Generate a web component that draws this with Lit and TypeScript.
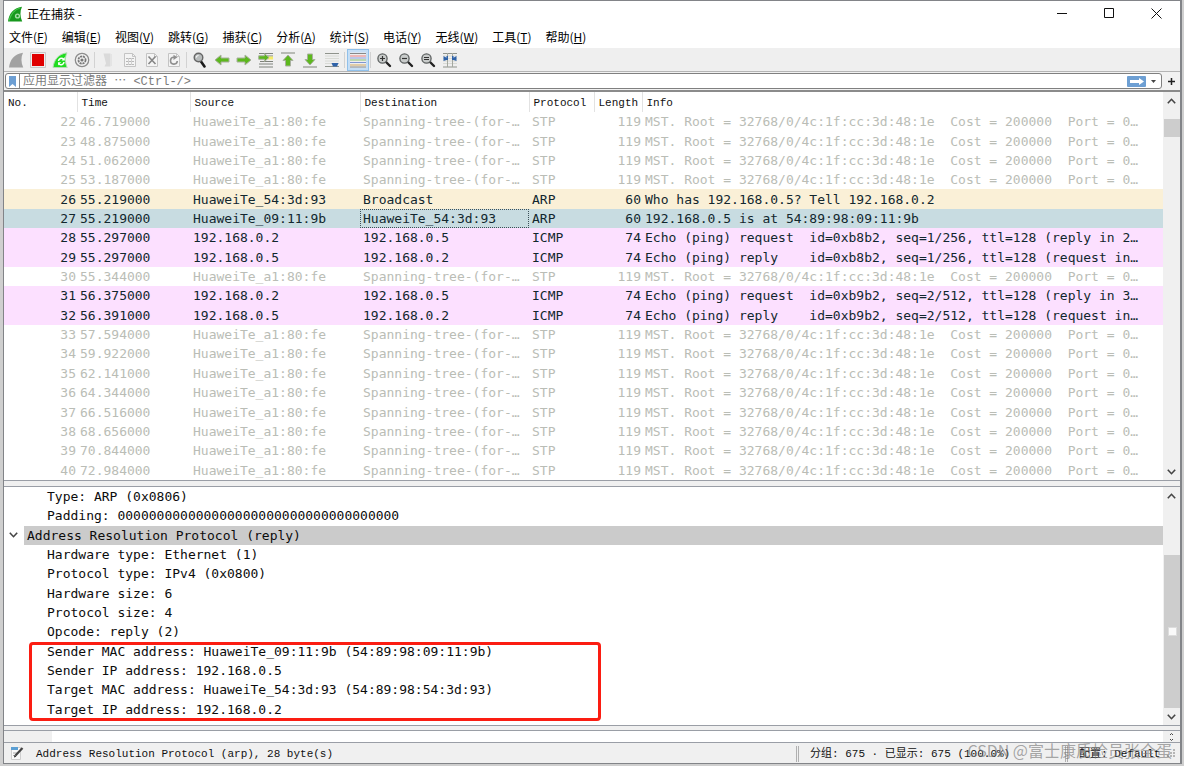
import { LitElement, html, svg, css, TemplateResult } from "lit";
import { customElement } from "lit/decorators.js";
import { classMap } from "lit/directives/class-map.js";

type Kind = "stp" | "arp" | "sel" | "icmp";
interface Packet {
  no: number;
  time: string;
  src: string;
  dst: string;
  proto: string;
  len: number;
  info: string;
  kind: Kind;
}

const stp = (no: number, time: string): Packet => ({
  no, time, src: "HuaweiTe_a1:80:fe", dst: "Spanning-tree-(for-…", proto: "STP", len: 119,
  info: "MST. Root = 32768/0/4c:1f:cc:3d:48:1e  Cost = 200000  Port = 0…", kind: "stp",
});
const ping = (no: number, time: string, reply: boolean, info: string): Packet => ({
  no, time, src: reply ? "192.168.0.5" : "192.168.0.2", dst: reply ? "192.168.0.2" : "192.168.0.5",
  proto: "ICMP", len: 74, info, kind: "icmp",
});

const PACKETS: Packet[] = [
  stp(22, "46.719000"), stp(23, "48.875000"), stp(24, "51.062000"), stp(25, "53.187000"),
  { no: 26, time: "55.219000", src: "HuaweiTe_54:3d:93", dst: "Broadcast", proto: "ARP", len: 60,
    info: "Who has 192.168.0.5? Tell 192.168.0.2", kind: "arp" },
  { no: 27, time: "55.219000", src: "HuaweiTe_09:11:9b", dst: "HuaweiTe_54:3d:93", proto: "ARP", len: 60,
    info: "192.168.0.5 is at 54:89:98:09:11:9b", kind: "sel" },
  ping(28, "55.297000", false, "Echo (ping) request  id=0xb8b2, seq=1/256, ttl=128 (reply in 2…"),
  ping(29, "55.297000", true, "Echo (ping) reply    id=0xb8b2, seq=1/256, ttl=128 (request in…"),
  stp(30, "55.344000"),
  ping(31, "56.375000", false, "Echo (ping) request  id=0xb9b2, seq=2/512, ttl=128 (reply in 3…"),
  ping(32, "56.391000", true, "Echo (ping) reply    id=0xb9b2, seq=2/512, ttl=128 (request in…"),
  stp(33, "57.594000"), stp(34, "59.922000"), stp(35, "62.141000"), stp(36, "64.344000"),
  stp(37, "66.516000"), stp(38, "68.656000"), stp(39, "70.844000"), stp(40, "72.984000"),
];

const MENUS: [string, string][] = [
  ["文件", "F"], ["编辑", "E"], ["视图", "V"], ["跳转", "G"], ["捕获", "C"], ["分析", "A"],
  ["统计", "S"], ["电话", "Y"], ["无线", "W"], ["工具", "T"], ["帮助", "H"],
];

const fin = "M1 15.5C2 8 6 2 15 .8c-2.200 4.500-2 10 .2 14.700z";
const lines = (ys: number[], color = "#b4b8b0") =>
  ys.map((y) => svg`<path d="M1 ${y}h14" stroke=${color}/>`);
const page = svg`<path d="M2.500 1.500h8l3 3v10h-11z" fill="#f4f4f4" stroke="#c4c4c4"/><path d="M10.500 1.500v3h3" fill="none" stroke="#c4c4c4"/>`;
const lens = (mark: TemplateResult | ReturnType<typeof svg>) => svg`
  <path d="M10 10l4 4" stroke="#222" stroke-width="2.400" stroke-linecap="round"/>
  <circle cx="6.500" cy="6.500" r="4.600" fill="#c9cccb" stroke="#5c6060" stroke-width="1.300"/>${mark}`;
const greenArrow = "M1 8l6-5v3h8v4H7v3z";

const ICONS: Record<string, ReturnType<typeof svg>> = {
  start: svg`<path d=${fin} fill="#a2a2a2"/>`,
  stop: svg`<path d="M.5 .5h15v15H.5z" fill="#efefef" stroke="#c8c8c8"/><path d="M2 2h12v12H2z" fill="#e00000"/>`,
  restart: svg`<path d=${fin} fill="#1fdc1f" stroke="#b4dcb4"/><path d="M6.500 9a3 3 0 0 1 5-2M12 10a3 3 0 0 1-5 2" fill="none" stroke="#fff" stroke-width="1.500"/><path d="M12.800 5v3.500H9.500zM6 13.500V10.200h3.200z" fill="#fff"/>`,
  options: svg`<circle cx="8" cy="8" r="6.700" fill="#f2f2f2" stroke="#8c8c8c" stroke-width="1.300"/><circle cx="8" cy="8" r="3.600" fill="none" stroke="#777" stroke-width="1.800" stroke-dasharray="2.200 .7"/><circle cx="8" cy="8" r="1.600" fill="#777"/>`,
  open: svg`<path d="M3.500 1.500h7v13h-6l1.500-3z" fill="#dadada"/><path d="M11 2v12" stroke="#e4e4e4" stroke-width="2"/>`,
  save: svg`${page}<path d="M4 6.500h8M4 9.500h8M4 12.500h8" stroke="#b8b8b8"/><path d="M6.500 6v7M9.500 6v7" stroke="#d0d0d0"/>`,
  close: svg`${page}<path d="M4.500 4.500l7 7.500M11.500 4.500l-7 7.500" stroke="#858585" stroke-width="1.600"/>`,
  reload: svg`${page}<path d="M11.300 9a3.400 3.400 0 1 1-3.300-3.700" fill="none" stroke="#909090" stroke-width="1.600"/><path d="M7.500 2.800l4 2.500-4 2.700z" fill="#909090"/>`,
  find: svg`<path d="M9 9.500l3.500 5" stroke="#1c1c1c" stroke-width="2.600" stroke-linecap="round"/><circle cx="6.500" cy="5.500" r="4.300" fill="#b8bcbc" stroke="#666" stroke-width="1.400"/><path d="M4.300 5.500a2.200 2.200 0 0 1 2.200-2" fill="none" stroke="#fff" stroke-width="1.200"/>`,
  back: svg`<path d=${greenArrow} fill="#5cb81c" stroke="#a8b09e" stroke-linejoin="round"/>`,
  forward: svg`<path d="M15 8L9 3v3H1v4h8v3z" fill="#5cb81c" stroke="#a8b09e" stroke-linejoin="round"/>`,
  goto: svg`<path d="M1 1.500h14M9 4h6M9 6.500h6M2 9.500h13M1 12h14M1 15h14" stroke="#7f837c"/><path d="M10 4.500h5v3h-5z" fill="#f4ec68"/><path d="M11 5.500L6.500 1.500v2.300H.7v3.500h5.800v2.200z" fill="#5cb81c" stroke="#a8b09e"/>`,
  first: svg`<path d="M1 1h14" stroke="#a5a9a0" stroke-width="1.500"/><path d="M8 3l5 5.500h-2.500V14H5.500V8.500H3z" fill="#5cb81c" stroke="#a8b09e"/>`,
  last: svg`<path d="M1 15h14" stroke="#a5a9a0" stroke-width="1.500"/><path d="M8 13l5-5.500h-2.500V2H5.500v5.500H3z" fill="#5cb81c" stroke="#a8b09e"/>`,
  autoscroll: svg`${lines([4, 6.5, 9, 11.5], "#d8dad5")}<path d="M1 1.500h14M1 14.500h14" stroke="#8f938c" stroke-width="1.200"/><path d="M7.500 11h7l-1.500 3.500H9z" fill="#2f62a8"/>`,
  colorize: svg`<path d="M0 .5h16v15H0z" fill="#eee"/><path d="M0 1.500h16M0 15h16" stroke="#888"/><path d="M0 4h16" stroke="#ee8080"/><path d="M0 6h16" stroke="#8aa0e0"/><path d="M0 8h16" stroke="#88c070"/><path d="M0 10.500h16" stroke="#7f95d0"/><path d="M0 13h16" stroke="#d0a860"/>`,
  zoomin: lens(svg`<path d="M4 6.500h5M6.500 4v5" stroke="#333" stroke-width="1.200"/>`),
  zoomout: lens(svg`<path d="M4 6.500h5" stroke="#333" stroke-width="1.200"/>`),
  zoomfit: lens(svg`<path d="M4 5.500h5M4 7.500h5" stroke="#333" stroke-width="1.200"/>`),
  resize: svg`${lines([4, 6.5, 9, 11.5], "#d8dad5")}<path d="M1 1.500h14M1 15h14" stroke="#8f938c"/><path d="M5.500 1v14M10.500 1v14" stroke="#a4a8a0"/><path d="M1.500 4l3 1.800v-1.800h1.500v4h-1.500l-3 1zM14.500 4l-3 1.800v-1.800H10v4h1.500l3 1z" fill="#2f62a8"/>`,
};

const TOOLS: [string, string][][] = [
  [["start", "开始捕获"], ["stop", "停止捕获"], ["restart", "重新捕获"], ["options", "捕获选项"]],
  [["open", "打开"], ["save", "保存"], ["close", "关闭"], ["reload", "重新加载"]],
  [["find", "查找"], ["back", "后退"], ["forward", "前进"], ["goto", "转到分组"], ["first", "首个分组"], ["last", "最新分组"], ["autoscroll", "自动滚动"]],
  [["colorize", "着色"]],
  [["zoomin", "放大"], ["zoomout", "缩小"], ["zoomfit", "普通大小"], ["resize", "调整列宽"]],
];

const icon = (body: ReturnType<typeof svg>) =>
  html`<svg width="16" height="16" viewBox="0 0 16 16" fill="none" aria-hidden="true">${body}</svg>`;
const chevron = (up: boolean) =>
  html`<svg width="9" height="6" viewBox="0 0 9 6" fill="none" aria-hidden="true"><path d=${up ? "M.8 5.200L4.500 1.300l3.700 3.900" : "M.8 .8l3.700 3.900L8.200 .8"} stroke="#444" stroke-width="1.600"/></svg>`;

@customElement("ws-titlebar")
export class WsTitlebar extends LitElement {
  static styles = css`
    :host { display: flex; align-items: center; height: 25px; padding-left: 3px; background: #fff; color: #000; font: 12px/16px "Noto Sans CJK SC", sans-serif; }
    .name { flex: 1; margin-left: 4px; }
    .ctl { display: grid; place-items: center; width: 47px; height: 25px; padding: 0; border: 0; background: none; }
  `;
  render() {
    return html`
      ${icon(svg`<path d=${fin} fill="#17981d"/><path d="M2 14.500C4 8 8 3.500 13 2" stroke="#45c24a" stroke-width="1.200"/><circle cx="10.500" cy="10" r="2.600" fill="#a6dfa8"/><circle cx="10.500" cy="10" r="1.200" fill="#17981d"/>`)}
      <span class="name">正在捕获 -</span>
      <button class="ctl" aria-label="最小化"><svg width="11" height="11"><path d="M0 5.500h10" stroke="#111"/></svg></button>
      <button class="ctl" aria-label="最大化"><svg width="11" height="11"><path d="M.5 .5h9v9h-9z" fill="none" stroke="#111"/></svg></button>
      <button class="ctl" aria-label="关闭"><svg width="11" height="11"><path d="M.5 .5l10 10M10.500 .5l-10 10" stroke="#111"/></svg></button>`;
  }
}

@customElement("ws-menubar")
export class WsMenubar extends LitElement {
  static styles = css`
    :host { display: flex; gap: 14px; height: 22px; padding-left: 5px; background: #fff; }
    .menu { padding: 0; border: 0; background: none; color: #000; font: 12px/22px "Noto Sans CJK SC", sans-serif; white-space: nowrap; }
  `;
  render() {
    return MENUS.map(([name, key]) => html`<button class="menu">${name}(<u>${key}</u>)</button>`);
  }
}

@customElement("ws-toolbar")
export class WsToolbar extends LitElement {
  static styles = css`
    :host { display: flex; align-items: center; height: 24px; padding-left: 1px; background: #efefef; border-bottom: 1px solid #b5b5b5; box-sizing: border-box; }
    .group { display: flex; }
    .group + .group::before { content: ""; width: 1px; height: 16px; margin: 3px 2px 3px 1px; background: #d2d2d2; }
    .tool { display: grid; place-items: center; box-sizing: border-box; width: 22px; height: 22px; padding: 0; border: 0; background: none; }
    .on { background: #c5def5; border: 1px solid #90c0ea; }
  `;
  render() {
    return TOOLS.map((g) => html`<div class="group">${g.map(([id, label]) => html`
      <button class=${classMap({ tool: true, on: id === "colorize" })} aria-label=${label}>${icon(ICONS[id])}</button>`)}</div>`);
  }
}

@customElement("ws-filter")
export class WsFilter extends LitElement {
  static styles = css`
    :host { display: flex; align-items: center; gap: 3px; height: 18px; padding: 0 3px 0 1px; background: #f2f2f2; border-bottom: 2px solid #8b8b8b; }
    .box { flex: 1; display: flex; align-items: center; box-sizing: border-box; height: 16px; border: 1px solid #808080; border-radius: 3px; background: #fff; }
    .mark { display: grid; place-items: center; width: 14px; height: 14px; padding: 0; border: 0; border-right: 1px solid #888; background: none; }
    .text { flex: 1; min-width: 0; height: 14px; padding: 2px 3px 0; border: 0; outline: 0; background: none; box-sizing: border-box; color: #222; font: 12px/14px "Liberation Mono", "Noto Sans CJK SC", monospace; }
    .text::placeholder { color: #7c7c7c; opacity: 1; line-height: 14px; }
    .apply { display: grid; place-items: center; width: 19px; height: 11px; padding: 0; border: 0; border-radius: 1px; background: #6d9fd3; }
    .drop { display: grid; place-items: center; width: 15px; height: 14px; padding: 0; border: 0; background: none; }
    .add { display: grid; place-items: center; width: 12px; height: 15px; padding: 0; border: 0; background: none; }
  `;
  render() {
    return html`
      <div class="box">
        <button class="mark" aria-label="书签"><svg width="7" height="11"><path d="M0 0h7v11L3.500 8 0 11z" fill="#6d9fd3"/></svg></button>
        <input class="text" aria-label="显示过滤器" placeholder="应用显示过滤器 ⋯ &lt;Ctrl-/&gt;">
        <button class="apply" aria-label="应用"><svg width="14" height="7"><path d="M0 2h9V0l5 3.500L9 7V5H0z" fill="#fff"/></svg></button>
        <button class="drop" aria-label="历史"><svg width="5" height="3"><path d="M0 0h5L2.500 3z" fill="#444"/></svg></button>
      </div>
      <button class="add" aria-label="添加"><svg width="7" height="7"><path d="M3.500 0v7M0 3.500h7" stroke="#222" stroke-width="1.500"/></svg></button>`;
  }
}

@customElement("ws-scroll")
export class WsScroll extends LitElement {
  static properties = { pos: {} };
  pos = "list";
  static styles = css`
    :host { display: flex; flex-direction: column; flex: none; width: 17px; background: #f0f0f0; }
    .arrow { display: grid; place-items: center; height: 17px; padding: 0; border: 0; background: none; }
    .track { flex: 1; display: flex; flex-direction: column; min-height: 0; }
    .thumb { display: grid; place-items: center; background: #cdcdcd; margin-left: 1px; }
    .list { padding-top: 10px; }
    .list .thumb { height: 18px; }
    .tree { justify-content: flex-end; }
    .tree .thumb { height: 75%; }
    .grip { width: 9px; height: 9px; background: #fafafa; border: 1px solid #ddd; box-sizing: border-box; }
  `;
  render() {
    return html`
      <button class="arrow" aria-label="向上">${chevron(true)}</button>
      <div class="track ${this.pos}"><div class="thumb">${this.pos === "tree" ? html`<i class="grip"></i>` : ""}</div></div>
      <button class="arrow" aria-label="向下">${chevron(false)}</button>`;
  }
}

@customElement("ws-packets")
export class WsPackets extends LitElement {
  static styles = css`
    :host { display: flex; min-height: 0; background: #fff; }
    .grid { flex: 1; min-width: 0; height: 100%; table-layout: fixed; border-collapse: collapse; color: #12272e; font: 13px/19px "DejaVu Sans Mono", monospace; }
    .c-no { width: 73px; } .c-time { width: 113px; } .c-src { width: 170px; } .c-dst { width: 169px; }
    .c-proto { width: 65px; } .c-len { width: 48px; }
    th { height: 20px; box-sizing: border-box; padding: 2px 0 0 4px; border-left: 1px solid #e2e2e2; color: #111; text-align: left; font: 11px/18px "Liberation Mono", monospace; }
    th:first-child { border-left: 0; }
    td { padding: 0 0 0 3px; white-space: pre; overflow: hidden; }
    .num { padding: 0 1px 0 0; text-align: right; }
    .stp { color: #babdb6; }
    .arp { background: #faf0d7; }
    .sel { background: #c8dce1; }
    .icmp { background: #fce0ff; }
    .sel .dst { outline: 1px dotted #3c5058; outline-offset: -1px; }
  `;
  render() {
    return html`
      <table class="grid">
        <colgroup><col class="c-no"><col class="c-time"><col class="c-src"><col class="c-dst"><col class="c-proto"><col class="c-len"><col></colgroup>
        <thead><tr>${["No.", "Time", "Source", "Destination", "Protocol", "Length", "Info"].map((h) => html`<th>${h}</th>`)}</tr></thead>
        <tbody>${PACKETS.map((p) => html`<tr class=${p.kind}><td class="num">${p.no}</td><td>${p.time}</td><td>${p.src}</td><td class="dst">${p.dst}</td><td>${p.proto}</td><td class="num">${p.len}</td><td>${p.info}</td></tr>`)}</tbody>
      </table>
      <ws-scroll pos="list"></ws-scroll>`;
  }
}

@customElement("ws-details")
export class WsDetails extends LitElement {
  static styles = css`
    :host { display: flex; min-height: 0; background: #fff; color: #0c0c0c; font: 13px/19px "DejaVu Sans Mono", monospace; }
    .tree { flex: 1; min-width: 0; display: flex; flex-direction: column; padding-bottom: 6px; }
    .row { flex: 1; display: flex; align-items: center; padding-left: 43px; white-space: pre; }
    .head { flex: 1; display: flex; }
    .toggle { display: grid; place-items: center; width: 20px; padding: 0 1px 0 0; border: 0; background: none; }
    .title { flex: 1; display: flex; align-items: center; padding-left: 3px; background: #cbcbcb; }
    .marked { position: relative; flex: 4; display: flex; flex-direction: column; }
    .marked::after { content: ""; position: absolute; inset: 0 auto -2px 25px; width: 572px; box-sizing: border-box; border: 3px solid #fb1d12; border-radius: 4px; }
  `;
  private row = (t: string) => html`<div class="row">${t}</div>`;
  render() {
    return html`
      <div class="tree">
        ${["Type: ARP (0x0806)", "Padding: 000000000000000000000000000000000000"].map(this.row)}
        <div class="head"><button class="toggle" aria-label="折叠">${chevron(false)}</button><div class="title">Address Resolution Protocol (reply)</div></div>
        ${["Hardware type: Ethernet (1)", "Protocol type: IPv4 (0x0800)", "Hardware size: 6", "Protocol size: 4", "Opcode: reply (2)"].map(this.row)}
        <div class="marked">
          ${["Sender MAC address: HuaweiTe_09:11:9b (54:89:98:09:11:9b)", "Sender IP address: 192.168.0.5", "Target MAC address: HuaweiTe_54:3d:93 (54:89:98:54:3d:93)", "Target IP address: 192.168.0.2"].map(this.row)}
        </div>
      </div>
      <ws-scroll pos="tree"></ws-scroll>`;
  }
}

@customElement("ws-status")
export class WsStatus extends LitElement {
  static styles = css`
    :host { position: relative; display: flex; align-items: center; box-sizing: border-box; height: 20px; padding: 2px 4px 0 5px; background: #f0f0f0; color: #111; font: 11px/16px "Liberation Mono", "Noto Sans CJK SC", monospace; white-space: pre; }
    .field { flex: 1; margin-left: 11px; }
    .counts { width: 255px; }
    .profile { width: 84px; }
    .sep { width: 1px; height: 16px; margin-right: 11px; border: solid #b0b0b0; border-width: 0 1px; }
    .grip { margin-left: 3px; }
    .water { position: absolute; right: 8px; top: -3px; color: rgba(120, 120, 120, 0.65); font: 16px/20px "Noto Sans CJK SC", sans-serif; }
  `;
  render() {
    return html`
      ${icon(svg`<path d="M2.500 1.500h9v12h-9z" fill="#fafafa" stroke="#cfcfcf"/><path d="M2 1h7v3H2z" fill="#5b9fd4"/><path d="M4 7h4M4 9.500h3" stroke="#aaa"/><path d="M6.500 9.500l7-7.500" stroke="#444" stroke-width="2.200"/><path d="M5 11.500l.5-2.500 1.800 1.700z" fill="#222"/>`)}
      <span class="field">Address Resolution Protocol (arp), 28 byte(s)</span>
      <i class="sep"></i><span class="counts">分组: 675 · 已显示: 675 (100.0%)</span>
      <i class="sep"></i><span class="profile">配置: Default</span>
      <svg class="grip" width="10" height="10"><path d="M7 1h2M4 4h2M7 4h2M1 7h2M4 7h2M7 7h2" stroke="#b5b5b5" stroke-width="2"/></svg>
      <span class="water">CSDN @富士康质检员张全蛋</span>`;
  }
}

@customElement("app-root")
export class AppRoot extends LitElement {
  static styles = css`
    :host { display: block; height: 100vh; box-sizing: border-box; padding: 0 2px 2px 3px; background: #cfcfcf; }
    .window { display: flex; flex-direction: column; box-sizing: border-box; height: 100%; border: 1px solid #828488; border-right-width: 2px; overflow: hidden; }
    .packets { flex: 388 1 0; }
    .details { flex: 238 1 0; }
    .split { flex: none; height: 5px; background: #f0f0f0; border: solid #9a9ea6; border-width: 1px 0; }
    .thin { height: 4px; }
    .bytes { flex: none; display: flex; justify-content: space-between; height: 11px; background: #fff; border-bottom: 1px solid #9a9ea6; }
    .offset { width: 48px; background: #f0f0f0; }
    .mini { display: flex; flex-direction: column; justify-content: space-around; align-items: center; width: 17px; background: #f0f0f0; }
  `;
  render() {
    return html`
      <main class="window">
        <ws-titlebar></ws-titlebar>
        <ws-menubar></ws-menubar>
        <ws-toolbar></ws-toolbar>
        <ws-filter></ws-filter>
        <ws-packets class="packets"></ws-packets>
        <div class="split"></div>
        <ws-details class="details"></ws-details>
        <div class="split thin"></div>
        <div class="bytes"><div class="offset"></div><div class="mini"><svg width="5" height="9"><path d="M1 3l1.500-1.500L4 3M1 7l1.500 1.500L4 7" fill="none" stroke="#444"/></svg></div></div>
        <ws-status></ws-status>
      </main>`;
  }
}
